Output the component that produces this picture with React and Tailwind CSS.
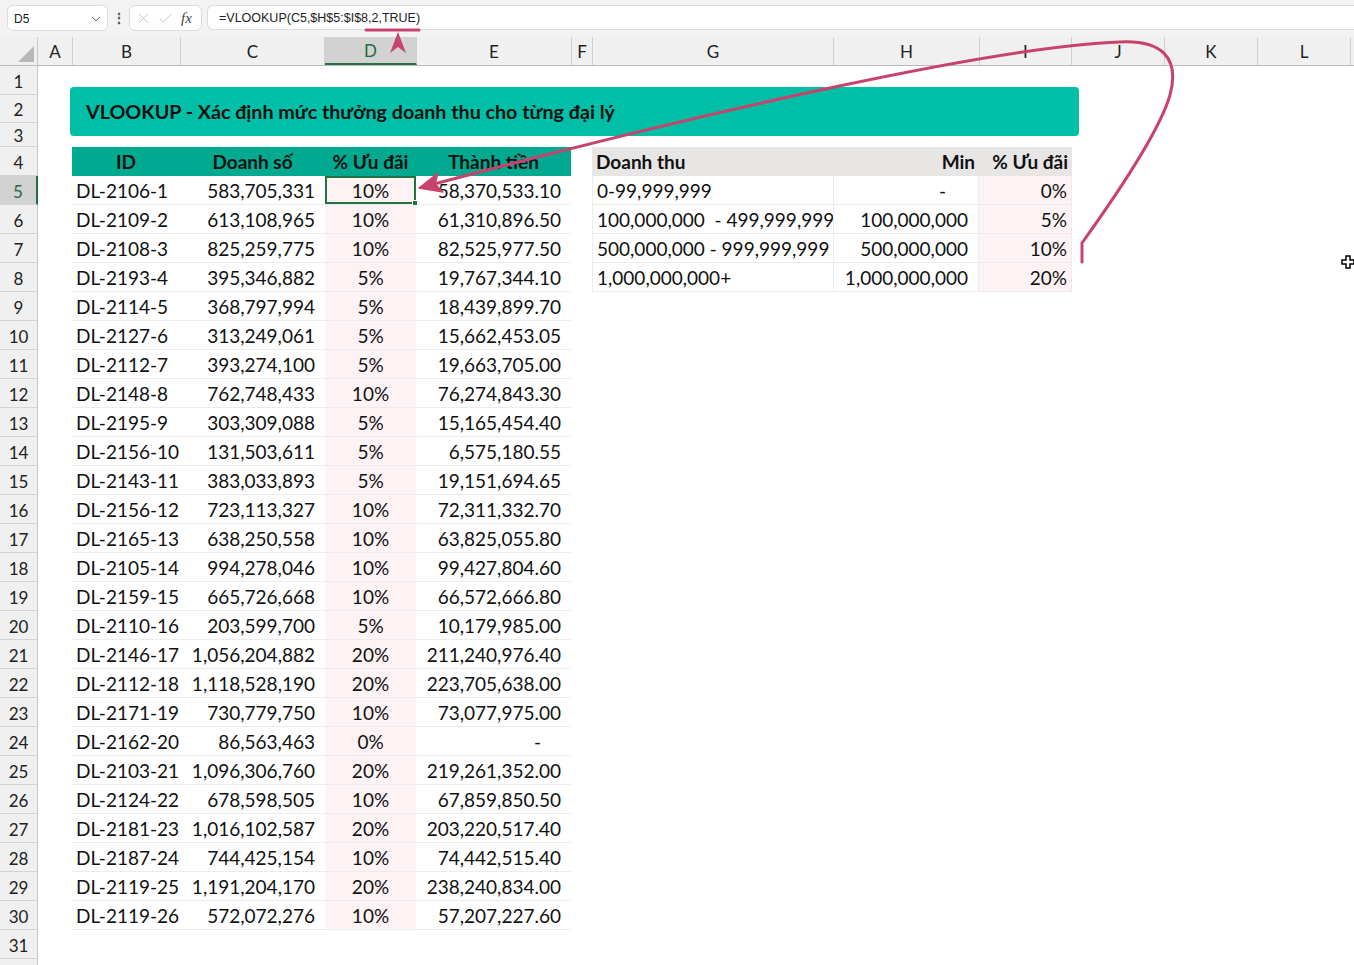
import { ChevronDown, X, Check } from 'lucide-react'

const cols = [
  { k: 'A', w: 35 },
  { k: 'B', w: 108 },
  { k: 'C', w: 144 },
  { k: 'D', w: 92 },
  { k: 'E', w: 155 },
  { k: 'F', w: 21 },
  { k: 'G', w: 241 },
  { k: 'H', w: 146 },
  { k: 'I', w: 92 },
  { k: 'J', w: 93 },
  { k: 'K', w: 93 },
  { k: 'L', w: 93 },
  { k: '', w: 93 },
]

const rowHeights = [29, 28, 24, ...Array(28).fill(29)]

const data = [
  ['DL-2106-1', '583,705,331', '10%', '58,370,533.10'],
  ['DL-2109-2', '613,108,965', '10%', '61,310,896.50'],
  ['DL-2108-3', '825,259,775', '10%', '82,525,977.50'],
  ['DL-2193-4', '395,346,882', '5%', '19,767,344.10'],
  ['DL-2114-5', '368,797,994', '5%', '18,439,899.70'],
  ['DL-2127-6', '313,249,061', '5%', '15,662,453.05'],
  ['DL-2112-7', '393,274,100', '5%', '19,663,705.00'],
  ['DL-2148-8', '762,748,433', '10%', '76,274,843.30'],
  ['DL-2195-9', '303,309,088', '5%', '15,165,454.40'],
  ['DL-2156-10', '131,503,611', '5%', '6,575,180.55'],
  ['DL-2143-11', '383,033,893', '5%', '19,151,694.65'],
  ['DL-2156-12', '723,113,327', '10%', '72,311,332.70'],
  ['DL-2165-13', '638,250,558', '10%', '63,825,055.80'],
  ['DL-2105-14', '994,278,046', '10%', '99,427,804.60'],
  ['DL-2159-15', '665,726,668', '10%', '66,572,666.80'],
  ['DL-2110-16', '203,599,700', '5%', '10,179,985.00'],
  ['DL-2146-17', '1,056,204,882', '20%', '211,240,976.40'],
  ['DL-2112-18', '1,118,528,190', '20%', '223,705,638.00'],
  ['DL-2171-19', '730,779,750', '10%', '73,077,975.00'],
  ['DL-2162-20', '86,563,463', '0%', '-'],
  ['DL-2103-21', '1,096,306,760', '20%', '219,261,352.00'],
  ['DL-2124-22', '678,598,505', '10%', '67,859,850.50'],
  ['DL-2181-23', '1,016,102,587', '20%', '203,220,517.40'],
  ['DL-2187-24', '744,425,154', '10%', '74,442,515.40'],
  ['DL-2119-25', '1,191,204,170', '20%', '238,240,834.00'],
  ['DL-2119-26', '572,072,276', '10%', '57,207,227.60'],
]

const tiers = [
  ['0-99,999,999', '-', '0%'],
  ['100,000,000  - 499,999,999', '100,000,000', '5%'],
  ['500,000,000 - 999,999,999', '500,000,000', '10%'],
  ['1,000,000,000+', '1,000,000,000', '20%'],
]

function FormulaBar() {
  return (
    <div className="h-[37px] bg-[#f3f3f3] flex items-start pt-[5px] pl-[7px] font-['Liberation_Sans',sans-serif] text-[#222]">
      <div className="w-[101px] h-[26px] bg-white border border-[#dcdcdc] rounded-md flex items-center justify-between pl-[6px] pr-[4px] pt-px text-[12px]">
        <span>D5</span>
        <ChevronDown size={14} strokeWidth={1.6} className="text-[#444]" />
      </div>
      <div className="w-[21px] h-[26px] flex items-center justify-center text-[14px] text-[#555] font-bold">⋮</div>
      <div className="w-[73px] h-[26px] bg-white border border-[#dcdcdc] rounded-md flex items-center gap-[5px] pl-[5px]">
        <X size={17} strokeWidth={1.1} className="text-[#b4b4b4]" />
        <Check size={17} strokeWidth={1.1} className="text-[#b4b4b4]" />
        <span className="font-['Liberation_Serif',serif] italic text-[15px] text-[#444] ml-[2px]">fx</span>
      </div>
      <div className="flex-1 ml-[5px] h-[25px] bg-white border border-[#dcdcdc] border-r-0 rounded-l-md flex items-center pl-[11px] pt-[2px] text-[12.5px]">
        =VLOOKUP(C5,$H$5:$I$8,2,TRUE)
      </div>
    </div>
  )
}

function ColumnHeaders() {
  return (
    <div className="h-[29px] flex bg-[#f0f0f0] border-b border-[#bcbcbc] text-[17px] text-[#222]">
      <div className="w-[38px] shrink-0 border-r border-[#c8c8c8] relative">
        <div className="absolute right-[3px] bottom-[3px] w-0 h-0 border-l-[16px] border-l-transparent border-b-[16px] border-b-[#b8b8b8]" />
      </div>
      {cols.map((c, i) => (
        <div
          key={i}
          style={{ width: c.w }}
          className={`shrink-0 flex items-center justify-center pt-[2px] border-r border-[#d0d0d0] ${c.k === 'D' ? 'bg-[#d2d2d2] text-[#1d6b3f] border-b-2 border-b-[#217346]' : ''}`}
        >
          {c.k}
        </div>
      ))}
    </div>
  )
}

function RowHeaders() {
  return (
    <div className="w-[38px] shrink-0 bg-[#f0f0f0] border-r border-[#c8c8c8] text-[17px] text-[#222]">
      {rowHeights.map((h, i) => (
        <div
          key={i}
          style={{ height: h }}
          className={`flex items-center justify-center pt-[3px] border-b border-[#d4d4d4] ${i === 4 ? 'bg-[#d2d2d2] text-[#1d6b3f] border-r-2 border-r-[#217346] -mr-px' : ''}`}
        >
          {i + 1}
        </div>
      ))}
      <div className="h-[29px]" />
    </div>
  )
}

function MainTable() {
  return (
    <div className="w-[499px] shrink-0">
      <div className="h-[29px] flex bg-[#00a98f] font-bold text-[#111] pt-[2px]">
        <div className="w-[108px] flex items-center justify-center">ID</div>
        <div className="w-[145px] flex items-center justify-center">Doanh số</div>
        <div className="w-[91px] flex items-center justify-center">% Ưu đãi</div>
        <div className="w-[155px] flex items-center justify-center">Thành tiền</div>
      </div>
      {data.map((r, i) => (
        <div key={r[0]} className="h-[29px] flex border-b border-[#ececec]">
          <div className="w-[108px] flex items-center pl-[4px] pt-[2px]">{r[0]}</div>
          <div className="w-[145px] flex items-center justify-end pr-[10px] pt-[2px]">{r[1]}</div>
          <div className={`w-[91px] flex items-center justify-center pt-[2px] bg-[#fdf3f5] ${i === 0 ? 'border-2 border-[#217346] relative' : ''}`}>
            {r[2]}
            {i === 0 && <div className="absolute -right-[4px] -bottom-[4px] w-[6px] h-[6px] bg-[#217346] border border-white" />}
          </div>
          <div className={`w-[155px] flex items-center justify-end pt-[2px] ${r[3] === '-' ? 'pr-[30px]' : 'pr-[10px]'}`}>{r[3]}</div>
        </div>
      ))}
    </div>
  )
}

function TierTable() {
  return (
    <div className="w-[480px] shrink-0">
      <div className="h-[29px] flex bg-[#e8e6e5] font-bold text-[#111] pt-[2px]">
        <div className="w-[242px] flex items-center pl-[4px]">Doanh thu</div>
        <div className="w-[145px] flex items-center justify-end pr-[4px]">Min</div>
        <div className="w-[93px] flex items-center justify-end pr-[4px]">% Ưu đãi</div>
      </div>
      {tiers.map((t, i) => (
        <div key={i} className="h-[29px] flex border-b border-[#ececec]">
          <div className="w-[242px] flex items-center pl-[4px] pt-[2px] whitespace-pre overflow-hidden border-l border-r border-[#ececec]">{t[0]}</div>
          <div className={`w-[145px] flex items-center justify-end pt-[2px] border-r border-[#ececec] ${t[1] === '-' ? 'pr-[32px]' : 'pr-[10px]'}`}>{t[1]}</div>
          <div className="w-[93px] flex items-center justify-end pr-[4px] pt-[2px] bg-[#fdf3f5] border-r border-[#ececec]">{t[2]}</div>
        </div>
      ))}
    </div>
  )
}

function Arrows() {
  const c = '#c8436b'
  return (
    <svg className="absolute inset-0 pointer-events-none" width="1354" height="965" viewBox="0 0 1354 965">
      <line x1="366" y1="30" x2="419" y2="30" stroke={c} strokeWidth="3" strokeLinecap="round" />
      <polygon points="398,32 390,53 398,47 406,53" fill={c} />
      <path
        d="M1082 262 L1082 243 C1120 190 1160 130 1170 95 C1180 58 1162 40 1120 42 C1000 46 720 108 434 184"
        fill="none"
        stroke={c}
        strokeWidth="3"
        strokeLinecap="round"
      />
      <polygon points="419,188 438,173 435,184 443,192" fill={c} stroke={c} strokeWidth="1.5" strokeLinejoin="round" />
      <path d="M1346 256 h4 v4 h4 v4 h-4 v4 h-4 v-4 h-4 v-4 h4 z" fill="white" stroke="black" strokeWidth="1.5" />
    </svg>
  )
}

export default function App() {
  return (
    <div className="relative w-[1354px] h-[965px] overflow-hidden bg-white font-['Lato',sans-serif]">
      <FormulaBar />
      <ColumnHeaders />
      <div className="flex text-[19px] text-[#111]">
        <RowHeaders />
        <div className="flex-1">
          <div className="h-[21px]" />
          <div className="ml-[32px] w-[1009px] h-[49px] bg-[#00bfa6] rounded-[4px] flex items-center pl-[16px] pt-px text-[19.7px] font-bold text-[#111]">
            VLOOKUP - Xác định mức thưởng doanh thu cho từng đại lý
          </div>
          <div className="h-[11px]" />
          <div className="flex items-start pl-[34px] gap-[21px]">
            <MainTable />
            <TierTable />
          </div>
        </div>
      </div>
      <Arrows />
    </div>
  )
}
